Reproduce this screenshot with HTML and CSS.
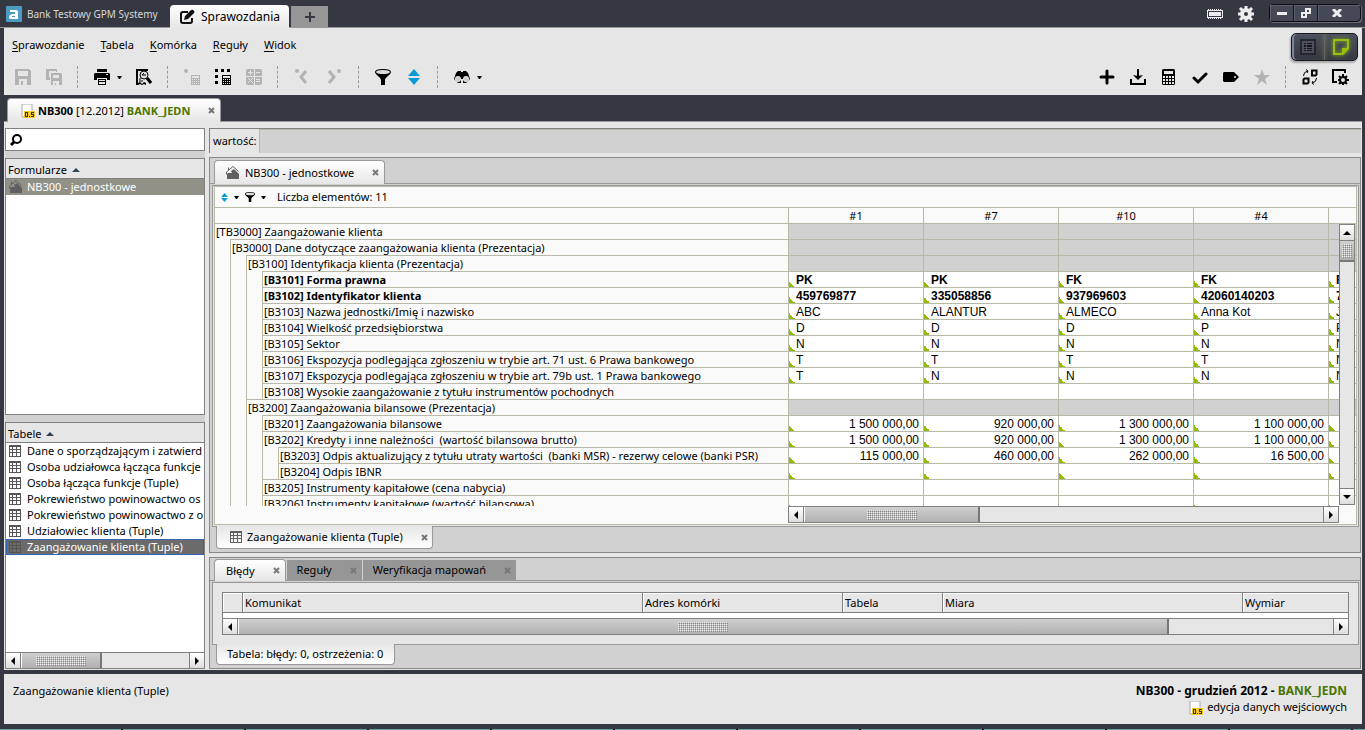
FILE: index.html
```html
<!DOCTYPE html>
<html lang="pl">
<head>
    <meta charset="UTF-8">
    <meta name="viewport" content="width=device-width, initial-scale=1.0">
    <title>Sprawozdania - NB300</title>
    <link rel="stylesheet" href="styles.css">
</head>
<body>
    <svg class="sprite" aria-hidden="true">
        <symbol id="i-close" viewBox="0 0 7 7"><path d="M1 1l5 5M6 1L1 6" stroke="currentColor" stroke-width="2" fill="none"/></symbol>
        <symbol id="i-grid" viewBox="0 0 12 12"><path fill="currentColor" fill-rule="evenodd" d="M0 0h12v12H0zM1 2v2h2V2zM4 2v2h3V2zM8 2v2h3V2zM1 5v2h2V5zM4 5v2h3V5zM8 5v2h3V5zM1 8v3h2V8zM4 8v3h3V8zM8 8v3h3V8z"/></symbol>
        <symbol id="i-house" viewBox="0 0 14 14"><path d="M1 13V8l1-1h4l-1-2 3-2 5 5v5z" fill="#606060"/><path d="M.5 8.500V6L7 .5l5.500 5M2.500 4V1.500" stroke="#606060" fill="none"/></symbol>
        <symbol id="i-note" viewBox="0 0 14 14"><path d="M1 0h10v13H1z" fill="#fff" stroke="#aaa"/><path d="M3 7h11v7H3z" fill="#f8c823"/><path d="M4 8h3v5H4zM5 9v3h1V9zM8 12h1v1H8zM10 8h3v1h-2v1h2v3h-3v-1h2v-1h-2z" fill="#333" fill-rule="evenodd"/></symbol>
        <symbol id="i-sort" viewBox="0 0 12 16"><path d="M6 0l6 7H0zM0 9h12l-6 7z" fill="#0a9bd6"/></symbol>
        <symbol id="i-caret" viewBox="0 0 5 3"><path d="M0 0h5L3 3H2z" fill="currentColor"/></symbol>
        <symbol id="i-up" viewBox="0 0 8 4"><path d="M4 0l4 4H0z" fill="currentColor"/></symbol>
        <symbol id="i-down" viewBox="0 0 8 4"><path d="M0 0h8L4 4z" fill="currentColor"/></symbol>
        <symbol id="i-left" viewBox="0 0 4 8"><path d="M4 0v8L0 4z" fill="currentColor"/></symbol>
        <symbol id="i-right" viewBox="0 0 4 8"><path d="M0 0l4 4-4 4z" fill="currentColor"/></symbol>
        <symbol id="i-calc" viewBox="0 0 13 16"><path fill="currentColor" fill-rule="evenodd" d="M1 0h11l1 1v14l-1 1H1l-1-1V1zM2 2v3h9V2zM1 7v2h2V7zM4 7v2h2V7zM7 7v2h2V7zM10 7v2h2V7zM1 10v2h2v-2zM4 10v2h2v-2zM7 10v2h2v-2zM10 10v2h2v-2zM1 13v2h2v-2zM4 13v2h2v-2zM7 13v2h2v-2zM10 13v2h2v-2z"/></symbol>
        <symbol id="i-calc-small" viewBox="0 0 9 10"><path fill="currentColor" fill-rule="evenodd" d="M0 0h9v10H0zM1 1v2h7V1zM1 4v1h1V4zM3 4v1h1V4zM5 4v1h1V4zM7 4v1h1V4zM1 6v1h1V6zM3 6v1h1V6zM5 6v1h1V6zM7 6v1h1V6zM1 8v1h1V8zM3 8v1h1V8zM5 8v1h1V8zM7 8v1h1V8z"/></symbol>
        <symbol id="i-funnel" viewBox="0 0 16 16"><path d="M0 3q0-3 8-3t8 3c0 3-6 5-6 8v5H6v-5c0-3-6-5-6-8z" fill="currentColor"/><ellipse cx="8" cy="3" rx="7" ry="2" fill="#ddd"/></symbol>
    </svg>

    <header class="titlebar">
        <svg class="app-logo" viewBox="0 0 16 16"><rect width="16" height="16" rx="1" fill="#4c9cbf"/><path d="M4 4h6q2 0 2 2v7H6q-3 0-3-2t3-3h3V6H4z" fill="#fff"/><path d="M6 10h3v1H6z" fill="#4c9cbf"/></svg>
        <span class="app-name">Bank Testowy GPM Systemy</span>
        <button class="app-tab">
            <svg width="16" height="16" viewBox="0 0 16 16"><path d="M9 3H4Q2 3 2 5v7q0 2 2 2h7q2 0 2-2V9" fill="none" stroke="#111" stroke-width="2"/><path d="M5 11l1-4 6-6q2-1 3 1 1 1 0 2l-6 6z" fill="#111"/></svg>
            Sprawozdania
        </button>
        <button class="app-tab-new" aria-label="Nowa karta"><svg width="10" height="10" viewBox="0 0 10 10"><path d="M5 0v10M0 5h10" stroke="#353841" stroke-width="2"/></svg></button>
        <div class="title-tools">
            <button aria-label="Pamięć"><svg width="16" height="10" viewBox="0 0 16 10"><path fill="#eee" fill-rule="evenodd" d="M0 1h16v8H0zM1 2v6h14V2zM2 3h12v4H2z"/><path d="M1 0h1v1H1zM3 0h1v1H3zM5 0h1v1H5zM7 0h1v1H7zM9 0h1v1H9zM11 0h1v1h-1zM13 0h1v1h-1zM1 9h1v1H1zM3 9h1v1H3zM5 9h1v1H5zM7 9h1v1H7zM9 9h1v1H9zM11 9h1v1h-1zM13 9h1v1h-1z" fill="#eee"/></svg></button>
            <button aria-label="Ustawienia"><svg width="16" height="16" viewBox="0 0 16 16"><circle cx="8" cy="8" r="4" fill="none" stroke="#eee" stroke-width="4"/><path d="M8 0v3M8 13v3M0 8h3M13 8h3M2 2l3 3M11 11l3 3M14 2l-3 3M5 11l-3 3" stroke="#eee" stroke-width="3"/></svg></button>
        </div>
        <div class="window-buttons">
            <button aria-label="Minimalizuj"><svg width="10" height="10" viewBox="0 0 10 10"><path d="M0 4h10v3H0z" fill="#eee"/></svg></button>
            <button aria-label="Przywróć"><svg width="10" height="10" viewBox="0 0 10 10"><path d="M5 1h4v4H5zM1 5h4v4H1z" fill="none" stroke="#eee" stroke-width="2"/></svg></button>
            <button class="wide" aria-label="Zamknij"><svg width="10" height="8" viewBox="0 0 10 8"><path d="M1 0l8 8M9 0L1 8" stroke="#eee" stroke-width="3"/></svg></button>
        </div>
    </header>

    <section class="commands">
        <div class="menu-row">
            <nav class="menu">
                <a href="#"><u>S</u>prawozdanie</a>
                <a href="#"><u>T</u>abela</a>
                <a href="#"><u>K</u>omórka</a>
                <a href="#"><u>R</u>eguły</a>
                <a href="#"><u>W</u>idok</a>
            </nav>
            <div class="view-switch">
                <button aria-label="Lista"><svg width="16" height="16" viewBox="0 0 16 16"><path d="M1 1h14v14H1z" fill="#4b505c" stroke="#23262e" stroke-width="2"/><path d="M4 4h2v1H4zM7 4h5v1H7zM4 6h2v2H4zM7 6h5v2H7zM4 9h2v1H4zM7 9h5v1H7zM4 11h2v1H4zM7 11h5v1H7z" fill="#15171d"/></svg></button>
                <button class="on" aria-label="Notatka"><svg width="16" height="16" viewBox="0 0 16 16"><path d="M0 0h16v10l-6 6H0zM2 2v12h7V9h5V2z" fill="#97bf0d" fill-rule="evenodd"/></svg></button>
            </div>
        </div>
        <div class="toolbar">
            <button disabled aria-label="Zapisz"><svg width="16" height="16" viewBox="0 0 16 16"><path fill="currentColor" fill-rule="evenodd" d="M0 0h14l2 2v14H0zM3 2v5h10V2zM4 10v6h2v-4h2v4h4v-6z"/></svg></button>
            <button disabled aria-label="Zapisz wszystko"><svg width="16" height="16" viewBox="0 0 16 16"><path fill="currentColor" fill-rule="evenodd" d="M0 0h11v3h-1V2H3v6h1v3H0zM5 4h10l1 1v11H5zM7 6v3h6V6zM7 12v4h2v-2h1v2h3v-4z"/></svg></button>
            <i class="sep"></i>
            <button aria-label="Drukuj"><svg width="16" height="16" viewBox="0 0 16 16"><path fill="currentColor" fill-rule="evenodd" d="M3 0h10v3H3zM0 5l1-1h14l1 1v6h-3V9H3v2H0zM12 5v1h2V5zM4 10h8v6H4zM5 11v1h6v-1zM5 13v2h6v-2z"/></svg></button>
            <button class="drop" aria-label="Opcje drukowania"><svg width="5" height="3"><use href="#i-caret"/></svg></button>
            <button aria-label="Podgląd"><svg width="17" height="16" viewBox="0 0 17 16"><path fill="currentColor" d="M1 0h12v2H3v12l2-1 2 2 2-2 2 1v2l-2-1-2 1-2-1-2 1H1z"/><circle cx="9" cy="6" r="4" fill="#ddd" stroke="currentColor"/><path d="M9 4L7 6h4M4 10h2M4 12h4" fill="none" stroke="currentColor"/><path d="M12 9l4 5" stroke="currentColor" stroke-width="3"/></svg></button>
            <i class="sep"></i>
            <button disabled aria-label="Oblicz komórkę"><svg width="16" height="16" viewBox="0 0 16 16"><circle cx="2" cy="2" r="2" fill="currentColor"/><use href="#i-calc-small" x="7" y="6" width="9" height="10"/></svg></button>
            <button aria-label="Oblicz tabelę"><svg width="16" height="16" viewBox="0 0 16 16"><path fill="currentColor" d="M0 0h3v3H0zM6 0h3v3H6zM12 0h3v3h-3zM0 6h3v3H0zM0 12h3v3H0z"/><use href="#i-calc-small" x="7" y="6" width="9" height="10"/></svg></button>
            <button disabled aria-label="Działania"><svg width="16" height="16" viewBox="0 0 16 16"><rect width="16" height="16" rx="2" fill="currentColor"/><path d="M2 3h5v1H2zM4 1h1v5H4zM10 3h4v1h-4zM10 10h4v1h-4zM10 12h4v1h-4zM2 9h1v1H2zM3 10h1v1H3zM4 11h1v1H4zM5 12h1v1H5zM5 10h1v1H5zM3 12h1v1H3zM6 9h1v1H6zM2 13h1v1H2zM6 13h1v1H6zM8 0h1v16H8zM0 7h16v1H0z" fill="#e6e6e6"/></svg></button>
            <i class="sep"></i>
            <button class="step" disabled aria-label="Poprzednia"><svg width="14" height="16" viewBox="0 0 14 16"><circle cx="2" cy="2" r="2" fill="currentColor"/><path d="M11 2L6 8l5 6" fill="none" stroke="currentColor" stroke-width="3"/></svg></button>
            <button class="step" disabled aria-label="Następna"><svg width="14" height="16" viewBox="0 0 14 16"><circle cx="12" cy="2" r="2" fill="currentColor"/><path d="M2 2l5 6-5 6" fill="none" stroke="currentColor" stroke-width="3"/></svg></button>
            <i class="sep"></i>
            <button aria-label="Filtr"><svg width="16" height="16"><use href="#i-funnel"/></svg></button>
            <button aria-label="Sortowanie"><svg width="12" height="16"><use href="#i-sort"/></svg></button>
            <i class="sep"></i>
            <button aria-label="Szukaj"><svg width="16" height="12" viewBox="0 0 16 12"><path d="M4 0h3v1h2V0h3l2 2 2 6-4 4H9V8H7v4H4L0 8l2-6z" fill="currentColor"/><circle cx="4" cy="8" r="2" fill="none" stroke="#e6e6e6" stroke-width="2"/><circle cx="12" cy="8" r="2" fill="none" stroke="#e6e6e6" stroke-width="2"/><circle cx="4" cy="8" r="2" fill="#ccc"/><circle cx="12" cy="8" r="2" fill="#ccc"/></svg></button>
            <button class="drop" aria-label="Opcje szukania"><svg width="5" height="3"><use href="#i-caret"/></svg></button>

            <div class="toolbar-right">
                <button aria-label="Dodaj"><svg width="16" height="16" viewBox="0 0 16 16"><path d="M8 2v12M2 8h12" stroke="currentColor" stroke-width="3" stroke-linecap="round"/></svg></button>
                <button aria-label="Pobierz"><svg width="16" height="16" viewBox="0 0 16 16"><path d="M1 10v5h14v-5M8 0v8" fill="none" stroke="currentColor" stroke-width="2"/><path d="M3 6l5 5 5-5-5 1z" fill="currentColor"/></svg></button>
                <button aria-label="Kalkulator"><svg width="13" height="16"><use href="#i-calc"/></svg></button>
                <button aria-label="Sprawdź"><svg width="16" height="16" viewBox="0 0 16 16"><path d="M2 9l4 4 8-8" fill="none" stroke="currentColor" stroke-width="3" stroke-linecap="round"/></svg></button>
                <button aria-label="Etykieta"><svg width="16" height="10" viewBox="0 0 16 10"><path d="M1 0h10l5 5-5 5H1L0 9V1zM12 4a1 1 0 0 0 0 2 1 1 0 0 0 0-2z" fill="currentColor" fill-rule="evenodd"/></svg></button>
                <button disabled aria-label="Ulubione"><svg width="16" height="16" viewBox="0 0 16 16"><path d="M8 0l2 6h6l-5 4 2 6-5-4-5 4 2-6-5-4h6z" fill="currentColor"/></svg></button>
                <i class="sep"></i>
                <button aria-label="Zamień"><svg width="16" height="16" viewBox="0 0 16 16"><path d="M10 1.500h4.500v4l-1 1H10zM2.500 9.500h4v4l-1 1h-4v-4z" fill="none" stroke="currentColor" stroke-width="2"/><path d="M1.500 7q0-4 4-5M4 .5L6 2 5 4M14.500 9q0 4-4 5M12 15.500L10 14l1-2" fill="none" stroke="currentColor"/></svg></button>
                <button aria-label="Opcje tabeli"><svg width="17" height="16" viewBox="0 0 17 16"><path d="M13 4V1H1v12h4" fill="none" stroke="currentColor" stroke-width="2"/><circle cx="11" cy="11" r="3" fill="none" stroke="currentColor" stroke-width="2"/><path d="M11 5v3M11 14v2M6 11h2M14 11h3M7 7l2 2M13 13l2 2M15 7l-2 2M9 13l-2 2" stroke="currentColor" stroke-width="2"/></svg></button>
            </div>
        </div>
    </section>

    <div class="doc-tabs">
        <div class="tab doc-tab">
            <svg class="note" width="14" height="14"><use href="#i-note"/></svg>
            <span><b>NB300</b> [12.2012] <b class="unit">BANK_JEDN</b></span>
            <button class="close" aria-label="Zamknij"><svg><use href="#i-close"/></svg></button>
        </div>
    </div>

    <main class="workspace">
        <aside class="sidebar">
            <div class="search">
                <label for="szukaj" aria-label="Szukaj"><svg width="12" height="12" viewBox="0 0 12 12"><circle cx="7" cy="5" r="4" fill="none" stroke="#000" stroke-width="2"/><path d="M4 8l-3 3" stroke="#000" stroke-width="3"/></svg></label>
                <input type="text" id="szukaj">
            </div>
            <section class="list-panel forms">
                <h2>Formularze <svg width="8" height="4"><use href="#i-up"/></svg></h2>
                <ul>
                    <li class="current"><button><svg width="14" height="14"><use href="#i-house"/></svg>NB300 - jednostkowe</button></li>
                </ul>
            </section>
            <section class="list-panel tables">
                <h2>Tabele <svg width="8" height="4"><use href="#i-up"/></svg></h2>
                <ul>
                    <li><button><svg width="12" height="12"><use href="#i-grid"/></svg>Dane o sporządzającym i zatwierd</button></li>
                    <li><button><svg width="12" height="12"><use href="#i-grid"/></svg>Osoba udziałowca łącząca funkcje</button></li>
                    <li><button><svg width="12" height="12"><use href="#i-grid"/></svg>Osoba łącząca funkcje (Tuple)</button></li>
                    <li><button><svg width="12" height="12"><use href="#i-grid"/></svg>Pokrewieństwo powinowactwo os</button></li>
                    <li><button><svg width="12" height="12"><use href="#i-grid"/></svg>Pokrewieństwo powinowactwo z o</button></li>
                    <li><button><svg width="12" height="12"><use href="#i-grid"/></svg>Udziałowiec klienta (Tuple)</button></li>
                    <li class="selected"><button><svg width="12" height="12"><use href="#i-grid"/></svg>Zaangażowanie klienta (Tuple)</button></li>
                </ul>
                <div class="hbar">
                    <button aria-label="W lewo"><svg width="4" height="8"><use href="#i-left"/></svg></button>
                    <div class="track"><div class="thumb list-thumb"><i class="grip"></i></div></div>
                    <button aria-label="W prawo"><svg width="4" height="8"><use href="#i-right"/></svg></button>
                </div>
            </section>
        </aside>

        <div class="content">
            <div class="value-bar">
                <label for="wartosc">wartość:</label>
                <input type="text" id="wartosc" disabled>
            </div>

            <section class="panel editor">
                <div class="tabs">
                    <div class="tab form-tab">
                        <svg width="14" height="14"><use href="#i-house"/></svg>
                        <span>NB300 - jednostkowe</span>
                        <button class="close" aria-label="Zamknij"><svg><use href="#i-close"/></svg></button>
                    </div>
                </div>
                <div class="frame">
                    <div class="grid-box">
                        <div class="grid-info">
                            <button aria-label="Sortuj"><svg width="7" height="9"><use href="#i-sort"/></svg></button>
                            <button aria-label="Menu sortowania"><svg width="5" height="3"><use href="#i-caret"/></svg></button>
                            <button aria-label="Filtruj"><svg width="10" height="10"><use href="#i-funnel"/></svg></button>
                            <button aria-label="Menu filtra"><svg width="5" height="3"><use href="#i-caret"/></svg></button>
                            <span>Liczba elementów: 11</span>
                        </div>
                        <div class="grid-view">
                            <table class="grid">
                                <colgroup><col class="tree-col"><col><col><col><col><col></colgroup>
                                <thead>
                                    <tr><th class="tree"></th><th>#1</th><th>#7</th><th>#10</th><th>#4</th><th></th></tr>
                                </thead>
                                <tbody>
                                    <tr class="group"><th class="tree l0"><span>[TB3000] Zaangażowanie klienta</span></th><td></td><td></td><td></td><td></td><td></td></tr>
                                    <tr class="group"><th class="tree l1"><span>[B3000] Dane dotyczące zaangażowania klienta (Prezentacja)</span></th><td></td><td></td><td></td><td></td><td></td></tr>
                                    <tr class="group"><th class="tree l2"><span>[B3100] Identyfikacja klienta (Prezentacja)</span></th><td></td><td></td><td></td><td></td><td></td></tr>
                                    <tr class="key"><th class="tree l3"><span>[B3101] Forma prawna</span></th><td>PK</td><td>PK</td><td>FK</td><td>FK</td><td>FK</td></tr>
                                    <tr class="key"><th class="tree l3"><span>[B3102] Identyfikator klienta</span></th><td>459769877</td><td>335058856</td><td>937969603</td><td>42060140203</td><td>7</td></tr>
                                    <tr><th class="tree l3"><span>[B3103] Nazwa jednostki/Imię i nazwisko</span></th><td>ABC</td><td>ALANTUR</td><td>ALMECO</td><td>Anna Kot</td><td>J</td></tr>
                                    <tr><th class="tree l3"><span>[B3104] Wielkość przedsiębiorstwa</span></th><td>D</td><td>D</td><td>D</td><td>P</td><td>P</td></tr>
                                    <tr><th class="tree l3"><span>[B3105] Sektor</span></th><td>N</td><td>N</td><td>N</td><td>N</td><td>N</td></tr>
                                    <tr><th class="tree l3"><span>[B3106] Ekspozycja podlegająca zgłoszeniu w trybie art. 71 ust. 6 Prawa bankowego</span></th><td>T</td><td>T</td><td>T</td><td>T</td><td>N</td></tr>
                                    <tr><th class="tree l3"><span>[B3107] Ekspozycja podlegająca zgłoszeniu w trybie art. 79b ust. 1 Prawa bankowego</span></th><td>T</td><td>N</td><td>N</td><td>N</td><td>N</td></tr>
                                    <tr class="plain"><th class="tree l3"><span>[B3108] Wysokie zaangażowanie z tytułu instrumentów pochodnych</span></th><td></td><td></td><td></td><td></td><td></td></tr>
                                    <tr class="group"><th class="tree l2"><span>[B3200] Zaangażowania bilansowe (Prezentacja)</span></th><td></td><td></td><td></td><td></td><td></td></tr>
                                    <tr class="num"><th class="tree l3"><span>[B3201] Zaangażowania bilansowe</span></th><td>1 500 000,00</td><td>920 000,00</td><td>1 300 000,00</td><td>1 100 000,00</td><td></td></tr>
                                    <tr class="num"><th class="tree l3"><span>[B3202] Kredyty i inne należności&nbsp; (wartość bilansowa brutto)</span></th><td>1 500 000,00</td><td>920 000,00</td><td>1 300 000,00</td><td>1 100 000,00</td><td></td></tr>
                                    <tr class="num"><th class="tree l4"><span>[B3203] Odpis aktualizujący z tytułu utraty wartości&nbsp; (banki MSR) - rezerwy celowe (banki PSR)</span></th><td>115 000,00</td><td>460 000,00</td><td>262 000,00</td><td>16 500,00</td><td></td></tr>
                                    <tr class="num"><th class="tree l4"><span>[B3204] Odpis IBNR</span></th><td></td><td></td><td></td><td></td><td></td></tr>
                                    <tr class="plain"><th class="tree l3"><span>[B3205] Instrumenty kapitałowe (cena nabycia)</span></th><td></td><td></td><td></td><td></td><td></td></tr>
                                    <tr class="num"><th class="tree l3"><span>[B3206] Instrumenty kapitałowe (wartość bilansowa)</span></th><td></td><td></td><td></td><td></td><td></td></tr>
                                </tbody>
                            </table>
                            <div class="vbar">
                                <button aria-label="W górę"><svg width="8" height="4"><use href="#i-up"/></svg></button>
                                <div class="track"><div class="thumb"><i class="grip"></i></div></div>
                                <button aria-label="W dół"><svg width="8" height="4"><use href="#i-down"/></svg></button>
                            </div>
                        </div>
                        <div class="grid-scroll">
                            <div class="hbar">
                                <button aria-label="W lewo"><svg width="4" height="8"><use href="#i-left"/></svg></button>
                                <div class="track"><div class="thumb grid-thumb"><i class="grip"></i></div></div>
                                <button aria-label="W prawo"><svg width="4" height="8"><use href="#i-right"/></svg></button>
                            </div>
                        </div>
                    </div>
                </div>
                <div class="bottom-tabs">
                    <div class="bottom-tab sheet-tab">
                        <svg width="12" height="12"><use href="#i-grid"/></svg>
                        <span>Zaangażowanie klienta (Tuple)</span>
                        <button class="close" aria-label="Zamknij"><svg><use href="#i-close"/></svg></button>
                    </div>
                </div>
            </section>

            <section class="panel messages">
                <div class="tabs">
                    <div class="tab">
                        <span>Błędy</span>
                        <button class="close" aria-label="Zamknij"><svg><use href="#i-close"/></svg></button>
                    </div>
                    <div class="tab off">
                        <span>Reguły</span>
                        <button class="close" aria-label="Zamknij"><svg><use href="#i-close"/></svg></button>
                    </div>
                    <div class="tab off">
                        <span>Weryfikacja mapowań</span>
                        <button class="close" aria-label="Zamknij"><svg><use href="#i-close"/></svg></button>
                    </div>
                </div>
                <div class="frame">
                    <div class="errors-box">
                        <table class="errors">
                            <colgroup><col class="c-mark"><col class="c-text"><col class="c-cell"><col class="c-table"><col class="c-measure"><col></colgroup>
                            <thead>
                                <tr><th></th><th>Komunikat</th><th>Adres komórki</th><th>Tabela</th><th>Miara</th><th>Wymiar</th></tr>
                            </thead>
                        </table>
                        <div class="hbar">
                            <button aria-label="W lewo"><svg width="4" height="8"><use href="#i-left"/></svg></button>
                            <div class="track"><div class="thumb errors-thumb"><i class="grip"></i></div></div>
                            <button aria-label="W prawo"><svg width="4" height="8"><use href="#i-right"/></svg></button>
                        </div>
                    </div>
                </div>
                <div class="bottom-tabs">
                    <div class="bottom-tab">Tabela: błędy: 0, ostrzeżenia: 0</div>
                </div>
            </section>
        </div>
    </main>

    <footer class="statusbar">
        <span>Zaangażowanie klienta (Tuple)</span>
        <div class="status-right">
            <b>NB300 - grudzień 2012 - <span class="unit">BANK_JEDN</span></b>
            <span><svg class="note" width="14" height="14"><use href="#i-note"/></svg>edycja danych wejściowych</span>
        </div>
    </footer>
    <div class="taskbar"></div>
</body>
</html>
```

FILE: styles.css
```css
* {
    margin: 0;
    padding: 0;
    box-sizing: border-box;
}
body {
    display: flex;
    flex-direction: column;
    height: 100vh;
    overflow: hidden;
    background: #353841;
    color: #000;
    font-family: "Noto Sans", "Open Sans", sans-serif;
    font-size: 11px;
    line-height: 16px;
}
button, input {
    font: inherit;
    color: inherit;
    background: none;
    border: none;
}
button {
    display: flex;
    align-items: center;
    justify-content: center;
}
a {
    color: inherit;
    text-decoration: none;
}
svg {
    flex: none;
}
.sprite {
    position: absolute;
    width: 0;
    height: 0;
}
.unit {
    color: #4b7500;
}

/* title bar */
.titlebar {
    display: flex;
    align-items: flex-end;
    height: 28px;
    padding: 0 4px 0 6px;
    border-bottom: 1px solid #999;
}
.app-logo {
    width: 16px;
    height: 16px;
    margin-bottom: 5px;
}
.app-name {
    width: 148px;
    padding-left: 5px;
    margin-bottom: 5px;
    color: #d8d8d8;
    font-size: 10px;
    white-space: nowrap;
}
.app-tab {
    gap: 6px;
    height: 23px;
    padding: 0 9px;
    margin-bottom: -1px;
    border-radius: 4px 4px 0 0;
    background: linear-gradient(#fff, #e6e6e6);
    font-size: 12px;
}
.app-tab-new {
    width: 37px;
    height: 21px;
    margin-left: 2px;
    background: #969696;
}
.title-tools {
    display: flex;
    gap: 15px;
    margin: 0 15px 5px auto;
}
.window-buttons {
    display: flex;
    height: 18px;
    margin-bottom: 5px;
    border: 1px solid #0c0d10;
    border-radius: 4px;
    background: #454956;
    box-shadow: 1px 1px 0 #666b78;
}
.window-buttons button {
    width: 24px;
    border-right: 1px solid #14161b;
    box-shadow: inset 1px 1px 0 #5d6270;
}
.window-buttons .wide {
    width: 42px;
    padding-right: 4px;
    border-right: none;
}

/* menu and toolbar */
.commands {
    margin: 0 3px 0 4px;
    background: #e6e6e6;
}
.menu-row {
    display: flex;
    align-items: center;
    justify-content: space-between;
    height: 33px;
    padding: 0 4px 0 8px;
}
.menu {
    display: flex;
    gap: 16px;
}
.menu u {
    text-underline-offset: 2px;
}
.view-switch {
    display: flex;
    width: 67px;
    height: 28px;
    margin-top: 4px;
    border: 1px solid #16181d;
    border-radius: 5px;
    background: linear-gradient(#4c505e, #353841);
    box-shadow: inset 2px 0 1px #8187a0, -1px 2px 2px #aaa;
}
.view-switch button {
    flex: 1;
}
.view-switch .on {
    border-left: 1px solid #5f6472;
    filter: drop-shadow(0 0 2px #97bf0d);
}
.toolbar {
    display: flex;
    align-items: center;
    height: 34px;
    padding: 0 6px 2px 3px;
}
.toolbar button {
    width: 31px;
    height: 24px;
}
.toolbar button:disabled {
    color: #b3b3b3;
}
.toolbar .drop {
    justify-content: flex-start;
    width: 11px;
}
.toolbar .step {
    width: 32px;
}
.toolbar-right {
    display: flex;
    align-items: center;
    margin-left: auto;
}
.sep {
    height: 22px;
    margin: 0 8px;
    border-left: 1px dashed #999;
}

/* tabs */
.doc-tabs {
    display: flex;
    align-items: flex-end;
    height: 27px;
    margin: 0 3px 0 4px;
    padding-left: 3px;
    border-bottom: 1px solid #999;
}
.tab {
    display: flex;
    align-items: center;
    height: 22px;
    padding: 0 5px 0 11px;
    margin-bottom: -1px;
    border: 1px solid #999;
    border-bottom: none;
    border-radius: 4px 4px 0 0;
    background: linear-gradient(#fff, #e6e6e6);
    white-space: nowrap;
}
.close {
    width: 7px;
    height: 7px;
    margin-left: 18px;
    color: #777;
}
.close svg {
    width: 7px;
    height: 7px;
}
.doc-tab {
    height: 24px;
    padding-left: 13px;
}
.doc-tab .note {
    margin-right: 3px;
}
.form-tab {
    height: 24px;
}
.form-tab span, .sheet-tab span {
    margin-left: 5px;
}
.tab.off {
    height: 20px;
    margin: 0 0 0 1px;
    padding: 0 5px 0 10px;
    border: none;
    border-radius: 0;
    background: #969696;
}

/* workspace */
.workspace {
    flex: 1;
    display: grid;
    grid-template-columns: 200px minmax(0, 1fr);
    gap: 4px;
    min-height: 0;
    margin: 0 3px 0 4px;
    padding: 6px 1px 1px;
    background: #e6e6e6;
}
.sidebar {
    display: flex;
    flex-direction: column;
    gap: 7px;
    min-width: 0;
    min-height: 0;
    background: #d1d1d1;
}
.search {
    display: flex;
    align-items: center;
    height: 23px;
    padding-left: 4px;
    border: 1px solid #808080;
    background: #fff;
}
.search label {
    display: flex;
}
.search input {
    flex: 1;
    min-width: 0;
    padding-left: 6px;
}
.list-panel {
    display: flex;
    flex-direction: column;
    min-height: 0;
    border: 1px solid #808080;
    background: #fff;
    overflow: hidden;
}
.forms {
    flex: 257;
}
.tables {
    flex: 247;
}
.list-panel h2 {
    height: 20px;
    padding: 3px 2px 0;
    border-bottom: 1px solid #808080;
    background: #e6e6e6;
    font-size: 11px;
    font-weight: normal;
    line-height: 16px;
}
.list-panel h2 svg {
    margin: 0 0 2px 2px;
    color: #2f4356;
}
.list-panel ul {
    flex: 1;
    list-style: none;
}
.list-panel li button {
    justify-content: flex-start;
    width: 100%;
    height: 16px;
    padding-left: 3px;
    white-space: nowrap;
}
.list-panel li svg {
    margin-right: 6px;
    color: #555;
}
.forms li svg {
    margin-right: 4px;
}
.list-panel .current {
    background: #919187;
    color: #fff;
}
.list-panel .selected {
    background: #6b6b6b;
    color: #fff;
    outline: 1px solid #3465b5;
    outline-offset: -1px;
}

/* scroll bars */
.hbar, .vbar {
    display: flex;
    border: 1px solid #808080;
    background: #e6e6e6;
}
.hbar {
    height: 17px;
}
.hbar button, .vbar button {
    flex: none;
    width: 14px;
    height: 15px;
    background: linear-gradient(#fff, #ddd);
}
.track {
    flex: 1;
    display: flex;
    border: 0 solid #808080;
}
.hbar .track {
    border-width: 0 1px;
}
.thumb {
    display: flex;
    align-items: center;
    justify-content: center;
    background: linear-gradient(#cfcfcf, #b0b0b0);
}
.hbar .thumb {
    border-right: 2px solid #777;
    border-left: 1px solid #fff;
}
.grip {
    width: 50px;
    height: 10px;
    background: conic-gradient(#bbb 25%, #888 0 50%, #bbb 0 75%, #f0f0f0 0) 0 0 / 2px 2px;
}
.list-panel .hbar {
    height: 16px;
    border-width: 1px 0 0;
}
.list-thumb {
    width: 48%;
}
.grid-thumb {
    width: 34%;
}
.errors-thumb {
    width: 85%;
}
.vbar {
    position: absolute;
    top: 17px;
    right: 1px;
    bottom: 1px;
    flex-direction: column;
    width: 16px;
}
.vbar .track {
    flex-direction: column;
    border-width: 1px 0;
}
.vbar .thumb {
    height: 21px;
    border-bottom: 2px solid #777;
}
.vbar .grip {
    width: 10px;
    height: 14px;
}

/* right side */
.content {
    display: flex;
    flex-direction: column;
    gap: 4px;
    min-width: 0;
    min-height: 0;
}
.value-bar {
    display: flex;
    height: 25px;
    border: 1px solid #808080;
    border-width: 1px 0 0 1px;
}
.value-bar label {
    padding: 4px 3px 0;
}
.value-bar input {
    flex: 1;
    min-width: 0;
    border: 1px solid #b8b9a8;
    border-width: 1px 0 0 1px;
    background: #d1d1d1;
}
.panel {
    display: flex;
    flex-direction: column;
    min-height: 0;
    border: 1px solid #888;
    background: #d1d1d1;
}
.editor {
    flex: 1;
}
.messages {
    height: 112px;
}
.tabs {
    display: flex;
    align-items: flex-end;
    height: 26px;
    padding-left: 4px;
    border-bottom: 1px solid #999;
}
.messages .tabs {
    height: 23px;
}
.frame {
    flex: 1;
    display: flex;
    min-height: 0;
    margin: 1px 1px 0 2px;
    border: 1px solid #999;
    background: #e6e6e6;
    padding: 0 1px 1px;
}
.bottom-tabs {
    display: flex;
    align-items: flex-start;
    height: 25px;
    padding-left: 6px;
}
.messages .bottom-tabs {
    height: 23px;
}
.bottom-tab {
    display: flex;
    align-items: center;
    height: 23px;
    margin-top: -1px;
    padding: 0 11px 0 10px;
    border: 1px solid #999;
    border-top: none;
    border-radius: 0 0 4px 4px;
    background: linear-gradient(#e6e6e6, #fff);
}
.messages .bottom-tab {
    height: 21px;
}
.sheet-tab {
    padding: 0 4px 0 13px;
}
.sheet-tab > svg {
    color: #606060;
}
.grid-box {
    flex: 1;
    display: flex;
    flex-direction: column;
    min-width: 0;
    border: 1px solid #b8b9a8;
    background: #fafafa;
}
.grid-info {
    display: flex;
    align-items: center;
    gap: 6px;
    height: 20px;
    padding-left: 6px;
}
.grid-info span {
    margin-left: 5px;
}
.grid-view {
    flex: 1;
    position: relative;
    min-height: 0;
    overflow: hidden;
}
.grid {
    width: 1248px;
    table-layout: fixed;
    border-spacing: 0;
}
.tree-col {
    width: 573px;
}
.grid tr {
    height: 16px;
}
.grid th, .grid td {
    height: 16px;
    border: 0 solid #b8b9a8;
    border-width: 1px 0 0 1px;
    font-weight: normal;
    line-height: 15px;
    white-space: nowrap;
}
.grid td {
    padding: 1px 0 0 7px;
    background: linear-gradient(to top right, #8fbc00 50%, transparent 50%) left bottom / 6px 6px no-repeat #fff;
    font-family: "Liberation Sans", sans-serif;
    font-size: 12px;
    line-height: 14px;
}
.grid .tree {
    border-left: none;
    text-align: left;
}
.grid tbody .tree {
    border-top: none;
    /* indent guides, one every 16px */
    background: repeating-linear-gradient(to right, #b8b9a8 0 1px, transparent 1px 16px) 15px 0 no-repeat;
}
.tree span {
    display: block;
    height: 16px;
    padding-left: 1px;
    border: 0 solid #b8b9a8;
    border-width: 1px 0 0 1px;
    background: #fafafa;
}
.grid .l0 span {
    border-left: none;
}
.grid .l1 {
    padding-left: 15px;
}
.grid .l2 {
    padding-left: 31px;
}
.grid .l3 {
    padding-left: 47px;
}
.grid .l4 {
    padding-left: 63px;
}
.grid .group td {
    background: #d1d1d1;
}
.grid .plain td {
    background: #fff;
}
.grid .key th, .grid .key td {
    font-weight: bold;
}
.grid .num td {
    padding-right: 4px;
    text-align: right;
}
.grid-scroll {
    padding: 0 17px 1px 573px;
}
.errors-box {
    flex: 1;
    display: flex;
    flex-direction: column;
    margin: 9px 8px 8px;
    border: 1px solid #808080;
    background: #fff;
}
.errors {
    width: 100%;
    margin-bottom: auto;
    table-layout: fixed;
    border-spacing: 0;
}
.errors th {
    height: 20px;
    padding-left: 2px;
    border-right: 1px solid #808080;
    border-bottom: 1px solid #808080;
    background: #e6e6e6;
    box-shadow: inset 1px 1px 0 #fff;
    font-weight: normal;
    text-align: left;
}
.errors th:last-child {
    border-right: none;
}
.c-mark {
    width: 20px;
}
.c-text {
    width: 400px;
}
.c-cell {
    width: 200px;
}
.c-table {
    width: 100px;
}
.c-measure {
    width: 300px;
}
.errors-box .hbar {
    height: 16px;
    border-width: 1px 0 0;
}

/* status bar */
.statusbar {
    display: flex;
    justify-content: space-between;
    height: 50px;
    margin: 4px 3px 4px 4px;
    padding: 9px 15px 0 9px;
    background: #e6e6e6;
}
.status-right {
    display: flex;
    flex-direction: column;
    text-align: right;
}
.status-right b {
    font-size: 12px;
}
.status-right .note {
    margin-right: 4px;
    vertical-align: middle;
}
.taskbar {
    height: 2px;
    background: linear-gradient(#353841 50%, transparent 50%), repeating-linear-gradient(to right, #67a3a5 0 121px, #111 121px 123px);
}
```
